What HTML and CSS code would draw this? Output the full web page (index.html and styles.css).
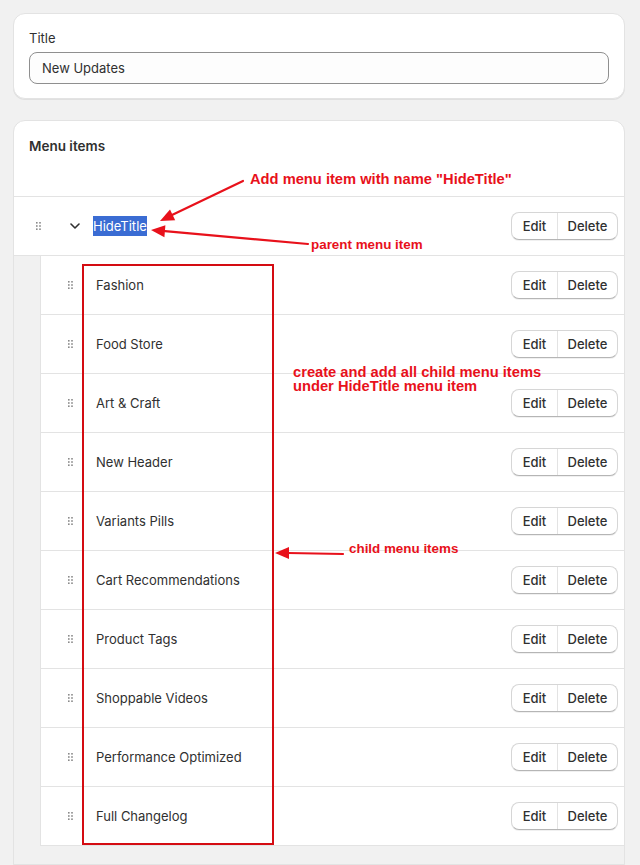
FILE: index.html
```html
<!DOCTYPE html>
<html lang="en">
<head>
<meta charset="utf-8">
<title>Menu</title>
<link rel="stylesheet" href="styles.css">
</head>
<body>
<div class="page">
  <section class="card title-card">
    <div class="label">Title</div>
    <div class="input">New Updates</div>
  </section>

  <section class="card menu-card">
    <div class="menu-header">Menu items</div>

    <div class="row parent">
      <svg class="handle" width="5" height="8" viewBox="0 0 5 8"><g fill="#8a8a8a"><rect x="0" y="0" width="1.6" height="1.6"/><rect x="3.2" y="0" width="1.6" height="1.6"/><rect x="0" y="3.2" width="1.6" height="1.6"/><rect x="3.2" y="3.2" width="1.6" height="1.6"/><rect x="0" y="6.4" width="1.6" height="1.6"/><rect x="3.2" y="6.4" width="1.6" height="1.6"/></g></svg>
      <svg class="chev" width="10" height="6" viewBox="0 0 10 6"><path d="M1 1 L5 5 L9 1" fill="none" stroke="#303030" stroke-width="1.6" stroke-linecap="round" stroke-linejoin="round"/></svg>
      <span class="name"><span class="sel">HideTitle</span></span>
      <div class="btns"><span class="btn edit">Edit</span><span class="btn del">Delete</span></div>
    </div>

    <div class="children">
      <div class="row child"><svg class="handle" width="5" height="8" viewBox="0 0 5 8"><g fill="#8a8a8a"><rect x="0" y="0" width="1.6" height="1.6"/><rect x="3.2" y="0" width="1.6" height="1.6"/><rect x="0" y="3.2" width="1.6" height="1.6"/><rect x="3.2" y="3.2" width="1.6" height="1.6"/><rect x="0" y="6.4" width="1.6" height="1.6"/><rect x="3.2" y="6.4" width="1.6" height="1.6"/></g></svg><span class="name">Fashion</span><div class="btns"><span class="btn edit">Edit</span><span class="btn del">Delete</span></div></div>
      <div class="row child"><svg class="handle" width="5" height="8" viewBox="0 0 5 8"><g fill="#8a8a8a"><rect x="0" y="0" width="1.6" height="1.6"/><rect x="3.2" y="0" width="1.6" height="1.6"/><rect x="0" y="3.2" width="1.6" height="1.6"/><rect x="3.2" y="3.2" width="1.6" height="1.6"/><rect x="0" y="6.4" width="1.6" height="1.6"/><rect x="3.2" y="6.4" width="1.6" height="1.6"/></g></svg><span class="name">Food Store</span><div class="btns"><span class="btn edit">Edit</span><span class="btn del">Delete</span></div></div>
      <div class="row child"><svg class="handle" width="5" height="8" viewBox="0 0 5 8"><g fill="#8a8a8a"><rect x="0" y="0" width="1.6" height="1.6"/><rect x="3.2" y="0" width="1.6" height="1.6"/><rect x="0" y="3.2" width="1.6" height="1.6"/><rect x="3.2" y="3.2" width="1.6" height="1.6"/><rect x="0" y="6.4" width="1.6" height="1.6"/><rect x="3.2" y="6.4" width="1.6" height="1.6"/></g></svg><span class="name">Art &amp; Craft</span><div class="btns"><span class="btn edit">Edit</span><span class="btn del">Delete</span></div></div>
      <div class="row child"><svg class="handle" width="5" height="8" viewBox="0 0 5 8"><g fill="#8a8a8a"><rect x="0" y="0" width="1.6" height="1.6"/><rect x="3.2" y="0" width="1.6" height="1.6"/><rect x="0" y="3.2" width="1.6" height="1.6"/><rect x="3.2" y="3.2" width="1.6" height="1.6"/><rect x="0" y="6.4" width="1.6" height="1.6"/><rect x="3.2" y="6.4" width="1.6" height="1.6"/></g></svg><span class="name">New Header</span><div class="btns"><span class="btn edit">Edit</span><span class="btn del">Delete</span></div></div>
      <div class="row child"><svg class="handle" width="5" height="8" viewBox="0 0 5 8"><g fill="#8a8a8a"><rect x="0" y="0" width="1.6" height="1.6"/><rect x="3.2" y="0" width="1.6" height="1.6"/><rect x="0" y="3.2" width="1.6" height="1.6"/><rect x="3.2" y="3.2" width="1.6" height="1.6"/><rect x="0" y="6.4" width="1.6" height="1.6"/><rect x="3.2" y="6.4" width="1.6" height="1.6"/></g></svg><span class="name">Variants Pills</span><div class="btns"><span class="btn edit">Edit</span><span class="btn del">Delete</span></div></div>
      <div class="row child"><svg class="handle" width="5" height="8" viewBox="0 0 5 8"><g fill="#8a8a8a"><rect x="0" y="0" width="1.6" height="1.6"/><rect x="3.2" y="0" width="1.6" height="1.6"/><rect x="0" y="3.2" width="1.6" height="1.6"/><rect x="3.2" y="3.2" width="1.6" height="1.6"/><rect x="0" y="6.4" width="1.6" height="1.6"/><rect x="3.2" y="6.4" width="1.6" height="1.6"/></g></svg><span class="name">Cart Recommendations</span><div class="btns"><span class="btn edit">Edit</span><span class="btn del">Delete</span></div></div>
      <div class="row child"><svg class="handle" width="5" height="8" viewBox="0 0 5 8"><g fill="#8a8a8a"><rect x="0" y="0" width="1.6" height="1.6"/><rect x="3.2" y="0" width="1.6" height="1.6"/><rect x="0" y="3.2" width="1.6" height="1.6"/><rect x="3.2" y="3.2" width="1.6" height="1.6"/><rect x="0" y="6.4" width="1.6" height="1.6"/><rect x="3.2" y="6.4" width="1.6" height="1.6"/></g></svg><span class="name">Product Tags</span><div class="btns"><span class="btn edit">Edit</span><span class="btn del">Delete</span></div></div>
      <div class="row child"><svg class="handle" width="5" height="8" viewBox="0 0 5 8"><g fill="#8a8a8a"><rect x="0" y="0" width="1.6" height="1.6"/><rect x="3.2" y="0" width="1.6" height="1.6"/><rect x="0" y="3.2" width="1.6" height="1.6"/><rect x="3.2" y="3.2" width="1.6" height="1.6"/><rect x="0" y="6.4" width="1.6" height="1.6"/><rect x="3.2" y="6.4" width="1.6" height="1.6"/></g></svg><span class="name">Shoppable Videos</span><div class="btns"><span class="btn edit">Edit</span><span class="btn del">Delete</span></div></div>
      <div class="row child"><svg class="handle" width="5" height="8" viewBox="0 0 5 8"><g fill="#8a8a8a"><rect x="0" y="0" width="1.6" height="1.6"/><rect x="3.2" y="0" width="1.6" height="1.6"/><rect x="0" y="3.2" width="1.6" height="1.6"/><rect x="3.2" y="3.2" width="1.6" height="1.6"/><rect x="0" y="6.4" width="1.6" height="1.6"/><rect x="3.2" y="6.4" width="1.6" height="1.6"/></g></svg><span class="name">Performance Optimized</span><div class="btns"><span class="btn edit">Edit</span><span class="btn del">Delete</span></div></div>
      <div class="row child"><svg class="handle" width="5" height="8" viewBox="0 0 5 8"><g fill="#8a8a8a"><rect x="0" y="0" width="1.6" height="1.6"/><rect x="3.2" y="0" width="1.6" height="1.6"/><rect x="0" y="3.2" width="1.6" height="1.6"/><rect x="3.2" y="3.2" width="1.6" height="1.6"/><rect x="0" y="6.4" width="1.6" height="1.6"/><rect x="3.2" y="6.4" width="1.6" height="1.6"/></g></svg><span class="name">Full Changelog</span><div class="btns"><span class="btn edit">Edit</span><span class="btn del">Delete</span></div></div>
    </div>
  </section>

  <svg class="annot" width="640" height="865" viewBox="0 0 640 865">
    <g fill="#e8111b" stroke="none">
      <text class="a-big" x="250" y="184">Add menu item with name "HideTitle"</text>
      <text class="a-small" x="311" y="249">parent menu item</text>
      <text class="a-big" x="293" y="377">create and add all child menu items</text>
      <text class="a-big" x="293" y="391">under HideTitle menu item</text>
      <text class="a-small" x="349" y="553">child menu items</text>
    </g>
    <g stroke="#e8111b" stroke-width="2.2" fill="none" stroke-linecap="round">
      <line x1="243" y1="181" x2="172" y2="215"/>
      <line x1="308" y1="244" x2="165" y2="231.2"/>
      <line x1="343" y1="554" x2="288" y2="553"/>
    </g>
    <g fill="#e8111b">
      <polygon points="160,221 175.2,220.3 170,209.5"/>
      <polygon points="151,230 165.4,225.3 164.4,237.2"/>
      <polygon points="275,553 289,547 289,559"/>
    </g>
    <rect x="83" y="265" width="190" height="579" fill="none" stroke="#d40c12" stroke-width="2"/>
  </svg>
</div>
</body>
</html>
```

FILE: styles.css
```css
html, body {
  margin: 0;
  padding: 0;
  background: #f1f1f1;
  overflow: hidden;
}

body {
  font-family: Inter, "Noto Sans", "Liberation Sans", sans-serif;
  font-size: 13px;
  color: #303030;
}

.page {
  position: relative;
  width: 640px;
  height: 865px;
  padding: 13px 15px 0 13px;
  box-sizing: border-box;
  display: flex;
  flex-direction: column;
  gap: 21px;
}

.card {
  background: #ffffff;
  border: 1px solid #e3e3e3;
  border-radius: 12px;
  box-shadow: 0 1px 0 rgba(0, 0, 0, 0.07);
}

.title-card {
  padding: 15px 15px 14px 15px;
}

.label {
  line-height: 18px;
  margin-bottom: 5px;
}

.input {
  height: 32px;
  box-sizing: border-box;
  border: 1px solid #8f8f8f;
  border-radius: 8px;
  background: #fdfdfd;
  padding: 0 12px;
  line-height: 30px;
}

.menu-card {
  flex: 1;
  overflow: hidden;
  border-bottom-left-radius: 0;
  border-bottom-right-radius: 0;
}

.menu-header {
  box-sizing: content-box;
  padding: 15px 15px 0 15px;
  height: 60px;
  font-size: 13.5px;
  font-weight: 600;
  line-height: 20px;
  border-bottom: 1px solid #e3e3e3;
}

.row {
  height: 59px;
  box-sizing: border-box;
  display: flex;
  align-items: center;
  border-bottom: 1px solid #e3e3e3;
  background: #ffffff;
  padding-right: 6px;
}

.parent {
  padding-left: 22px;
}

.parent .handle {
  margin-right: 29px;
}

.chev {
  margin-right: 13px;
}

.sel {
  background: #3a6cd3;
  color: #ffffff;
  line-height: 20px;
  display: inline-block;
}

.name {
  flex: 1;
  line-height: 20px;
}

.children {
  background: #f1f1f1;
  padding-left: 26px;
  height: 700px;
}

.child {
  border-left: 1px solid #e3e3e3;
  padding-left: 27px;
}

.child .handle {
  margin-right: 23px;
}

.btns {
  display: flex;
  height: 28px;
  box-sizing: border-box;
  border: 1px solid #d6d6d6;
  border-bottom-color: #b5b5b5;
  border-radius: 8px;
  background: #ffffff;
  box-shadow: 0 1px 0 rgba(0, 0, 0, 0.06);
  overflow: hidden;
}

.btn {
  display: flex;
  align-items: center;
  justify-content: center;
  font-weight: 500;
  font-size: 13px;
  color: #303030;
}

.edit {
  width: 45px;
  border-right: 1px solid #e3e3e3;
}

.del {
  width: 59px;
}

.annot {
  position: absolute;
  left: 0;
  top: 0;
  pointer-events: none;
}

.a-big {
  font-family: "Liberation Sans", Arial, sans-serif;
  font-weight: 700;
  font-size: 14.7px;
}

.a-small {
  font-family: "Liberation Sans", Arial, sans-serif;
  font-weight: 700;
  font-size: 13.4px;
}
```
